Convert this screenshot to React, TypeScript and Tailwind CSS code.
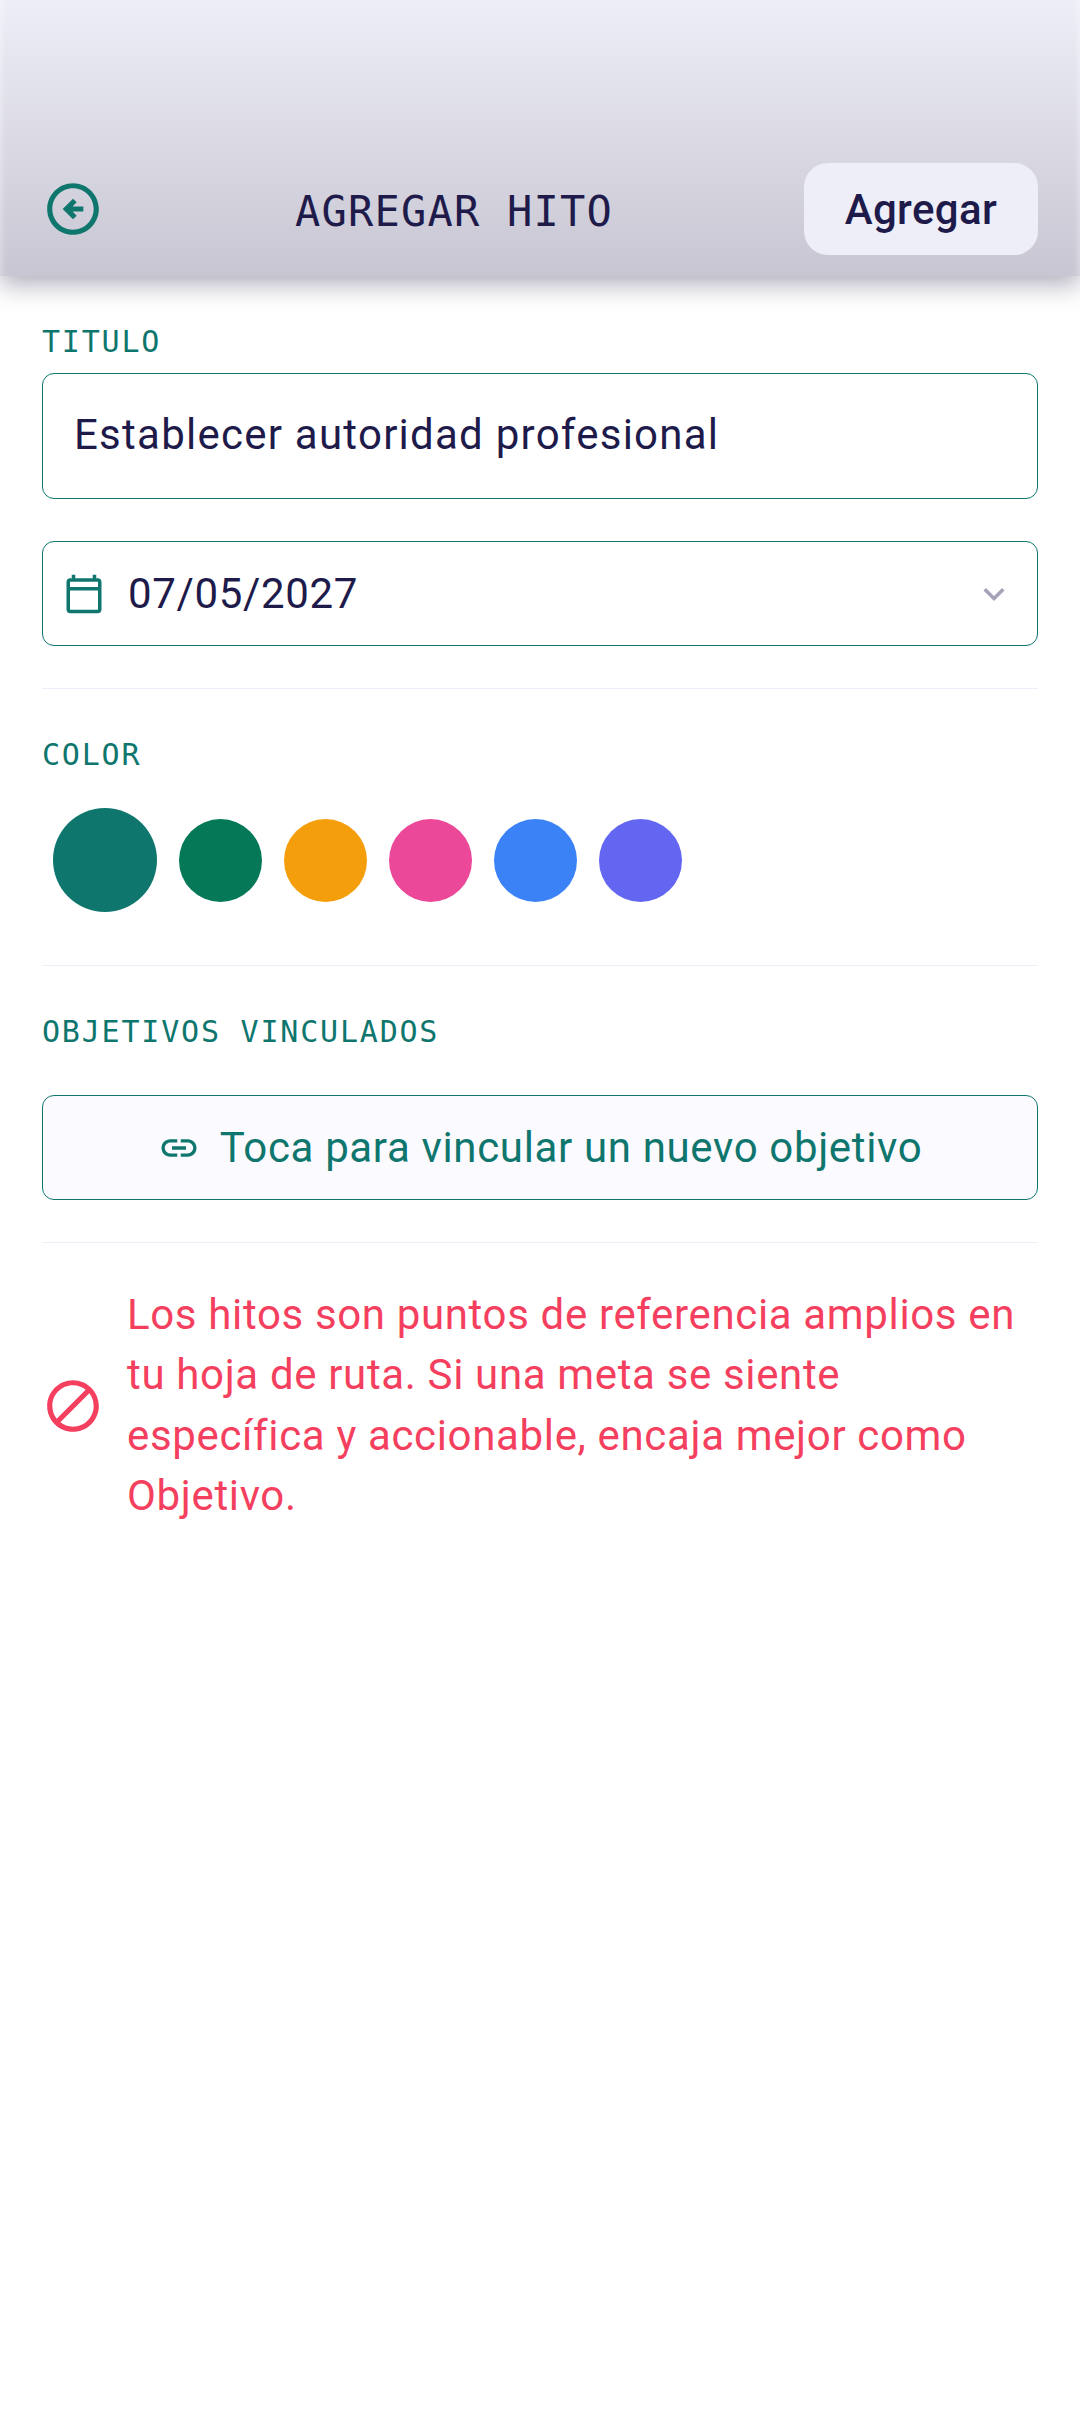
import { MdLink, MdOutlineArrowCircleLeft, MdOutlineBlock, MdOutlineCalendarToday, MdExpandMore } from 'react-icons/md';

const swatches = ['bg-[#047857]', 'bg-[#f59e0b]', 'bg-[#ec4899]', 'bg-[#3b82f6]', 'bg-[#6366f1]'];

function Label({ children }: { children: string }) {
  return (
    <p className="font-['DejaVu_Sans_Mono',monospace] text-[30px] font-light leading-[37px] tracking-[1.8px] text-[#0f766e]">
      {children}
    </p>
  );
}

function Divider() {
  return <div className="h-px bg-[#eeeef8]" />;
}

export default function App() {
  return (
    <div className="flex h-[2424px] w-[1080px] flex-col overflow-hidden bg-white font-['Roboto',sans-serif] text-[#1e1b4b]">
      <header className="relative z-10 flex h-[276px] items-end bg-gradient-to-b from-[#eeeef8] to-[#c7c6d2] px-[42px] pb-[21px] shadow-[0_8px_24px_rgba(70,68,100,0.45),inset_8px_0_8px_-8px_rgba(255,255,255,0.6),inset_-8px_0_8px_-8px_rgba(255,255,255,0.6)]">
        <MdOutlineArrowCircleLeft className="mb-[15px] h-[62px] w-[62px] text-[#0f766e]" />
        <h1 className="mb-[18px] flex-1 text-center font-['DejaVu_Sans_Mono',monospace] text-[42px] font-normal leading-[50px] tracking-[1.2px]">
          AGREGAR HITO
        </h1>
        <button className="flex h-[92px] w-[234px] items-center justify-center rounded-[24px] bg-[#eeeef8] text-[42px] font-medium tracking-[0.4px]">
          Agregar
        </button>
      </header>

      <main className="flex flex-col px-[42px]">
        <div className="mt-[47px]">
          <Label>TITULO</Label>
        </div>
        <div className="mt-[13px] flex h-[126px] items-center rounded-[12px] border border-[#0f766e] pb-[3px] pl-[31px] pr-[32px] text-[42px] tracking-[1.25px]">
          Establecer autoridad profesional
        </div>

        <div className="mt-[42px] flex h-[105px] items-center rounded-[12px] border border-[#0f766e] pl-[20px] pr-[22px] text-[42px] tracking-[0.65px]">
          <MdOutlineCalendarToday className="h-[42px] w-[42px] text-[#0f766e]" />
          <span className="ml-[23px] flex-1">07/05/2027</span>
          <MdExpandMore className="h-[42px] w-[42px] text-[#a5a3b8]" />
        </div>

        <div className="mt-[42px]">
          <Divider />
        </div>

        <div className="mt-[47px]">
          <Label>COLOR</Label>
        </div>

        <div className="mt-[35px] flex items-center gap-[22px] pl-[11px]">
          <div className="h-[104px] w-[104px] rounded-full bg-[#0f766e]" />
          {swatches.map((c) => (
            <div key={c} className={`h-[83px] w-[83px] rounded-full ${c}`} />
          ))}
        </div>

        <div className="mt-[53px]">
          <Divider />
        </div>

        <div className="mt-[47px]">
          <Label>OBJETIVOS VINCULADOS</Label>
        </div>

        <div className="mt-[45px] flex h-[105px] items-center justify-center gap-[20px] rounded-[12px] border border-[#0f766e] bg-[#fafaff] text-[42px] tracking-[0.65px] text-[#0f766e]">
          <MdLink className="h-[42px] w-[42px]" />
          <span>Toca para vincular un nuevo objetivo</span>
        </div>

        <div className="mt-[42px]">
          <Divider />
        </div>

        <div className="mt-[42px] flex items-center text-[#f43f5e]">
          <MdOutlineBlock className="h-[62px] w-[62px] shrink-0" />
          <p className="ml-[23px] text-[42px] leading-[60.3px] tracking-[0.65px]">
            Los hitos son puntos de referencia amplios en tu hoja de ruta. Si una meta se siente específica y accionable, encaja mejor como Objetivo.
          </p>
        </div>
      </main>
    </div>
  );
}
